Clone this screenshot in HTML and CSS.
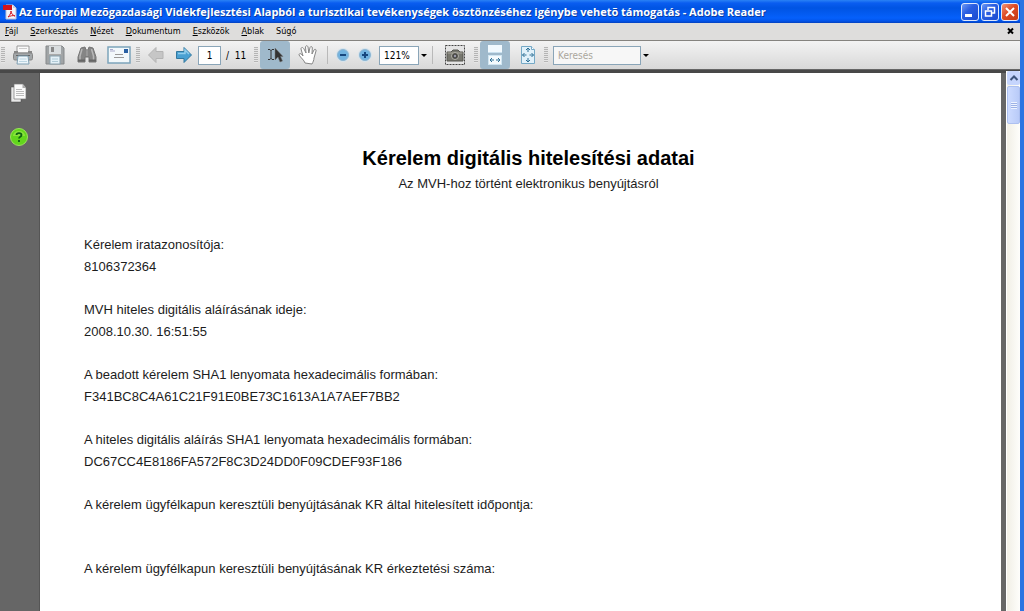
FILE: index.html
```html
<!DOCTYPE html>
<html lang="hu">
<head>
<meta charset="utf-8">
<title>Adobe Reader</title>
<link rel="stylesheet" href="styles.css">
</head>
<body>
<div class="window">
  <header class="titlebar">
    <svg class="app-icon" width="14" height="16" viewBox="0 0 14 16" aria-hidden="true">
      <path d="M3 1h7l3 3v11H3z" fill="#f4f4fa" stroke="#b9c0d8"/>
      <path d="M10 1v3h3z" fill="#c9cfe2"/>
      <rect x="0" y="1" width="9" height="5" fill="#d3141c"/>
      <path d="M5 13c2-2 3-4 3-6 0 3 2 4 4 5-2-1-5 0-7 1z" fill="none" stroke="#d3141c"/>
    </svg>
    <h1 class="title">Az Európai Mezõgazdasági Vidékfejlesztési Alapból a turisztikai tevékenységek ösztönzéséhez igénybe vehetõ támogatás - Adobe Reader</h1>
    <div class="controls">
      <button class="ctl" type="button" aria-label="Kis méret"><svg width="16" height="16" viewBox="0 0 16 16"><path d="M3 11.500h7" stroke="#fff" stroke-width="3"/></svg></button>
      <button class="ctl" type="button" aria-label="Előző méret"><svg width="16" height="16" viewBox="0 0 16 16"><path d="M6 6V3.500h6.500v5.500h-3" fill="none" stroke="#fff" stroke-width="1.500"/><path d="M3.500 7h6v5h-6z" fill="none" stroke="#fff" stroke-width="1.500"/></svg></button>
      <button class="ctl close" type="button" aria-label="Bezárás"><svg width="16" height="16" viewBox="0 0 16 16"><path d="M4 4l8 8M12 4l-8 8" stroke="#fff" stroke-width="2"/></svg></button>
    </div>
  </header>

  <nav class="menubar">
    <button class="menu" type="button"><u>F</u>ájl</button>
    <button class="menu" type="button"><u>S</u>zerkesztés</button>
    <button class="menu" type="button"><u>N</u>ézet</button>
    <button class="menu" type="button"><u>D</u>okumentum</button>
    <button class="menu" type="button"><u>E</u>szközök</button>
    <button class="menu" type="button"><u>A</u>blak</button>
    <button class="menu" type="button">Sú<u>g</u>ó</button>
    <button class="doc-close" type="button" aria-label="Dokumentum bezárása"><svg width="8" height="8" viewBox="0 0 8 8"><path d="M1 1.500l5 5M6 1.500l-5 5" stroke="#000" stroke-width="2"/></svg></button>
  </nav>

  <div class="toolbar">
    <span class="grip"></span>
    <div class="group">
      <button class="tool file" type="button" aria-label="Nyomtatás">
        <svg width="20" height="20" viewBox="0 0 20 20"><path d="M4 1h12v7H4z" fill="#fafafa" stroke="#999"/><path d="M6 3.500h8" stroke="#ccc"/><rect x="1" y="6" width="4" height="3" fill="#888"/><rect x="15" y="6" width="4" height="3" fill="#888"/><rect x="0.500" y="8" width="19" height="7" rx="1.500" fill="#a3a7a9" stroke="#868686"/><path d="M3 10.500h14" stroke="#666"/><path d="M5 11h10l1 8H4z" fill="#edf6fb" stroke="#7f9fb2"/><path d="M6.500 14h7M6 16.500h8" stroke="#bcd5e2"/></svg>
      </button>
      <button class="tool file" type="button" aria-label="Mentés">
        <svg width="20" height="20" viewBox="0 0 20 20"><path d="M1 1h16l2 2v16H1z" fill="#a0a4a6" stroke="#86898b"/><rect x="4" y="1" width="12" height="8" fill="#d9dddf"/><rect x="6" y="2" width="3" height="5" fill="#888"/><path d="M3 9.500h14" stroke="#aaa"/><rect x="5" y="11" width="10" height="8" fill="#e3f0f7" stroke="#8ba2ae"/><path d="M7 14h6M7 16.500h6" stroke="#afc9d6"/></svg>
      </button>
      <button class="tool file" type="button" aria-label="Keresés a dokumentumban">
        <svg width="20" height="20" viewBox="0 0 20 20"><path d="M4 3l4-1 1 3h2l1-3 4 1 3 9v5h-7v-5H8v5H1v-5z" fill="#858585" stroke="#757575"/><path d="M5 4L3 11v5M14.500 4l2 7v5" fill="none" stroke="#b7b7b7" stroke-width="1.500"/><path d="M1 15.500h7M12 15.500h7" stroke="#666" stroke-width="2"/><path d="M10 5v6" stroke="#aaa"/></svg>
      </button>
      <button class="tool file" type="button" aria-label="E-mail">
        <svg width="24" height="18" viewBox="0 0 24 18"><rect x="1" y="1" width="22" height="16" fill="#f2f8fb" stroke="#7ca4bb" stroke-width="1.500"/><path d="M3 5h5M3 3.500h3" stroke="#aac"/><rect x="17" y="3" width="4" height="4" fill="#2860a4"/><path d="M8 8.500h8M7 11.500h10" stroke="#999"/></svg>
      </button>
    </div>
    <span class="grip"></span>
    <div class="group">
      <button class="tool step" type="button" aria-label="Előző oldal">
        <svg width="18" height="18" viewBox="0 0 18 18"><path d="M1.500 9L9 1.500v4h7v7H9v4z" fill="#c6c6c6" stroke="#b4b4b4" stroke-linejoin="round"/></svg>
      </button>
      <button class="tool step" type="button" aria-label="Következő oldal">
        <svg width="18" height="18" viewBox="0 0 18 18"><path d="M16.500 9L9 1.500v4H1.500v7H9v4z" fill="#4aa0d2" stroke="#32789f" stroke-linejoin="round"/><path d="M3 7.500h7V4l4 4" fill="none" stroke="#93cdec" stroke-width="1.500"/></svg>
      </button>
      <label class="pager"><input class="field page-no" type="text" value="1"><span>/&nbsp; 11</span></label>
    </div>
    <span class="grip"></span>
    <div class="group modes">
      <button class="tool mode active" type="button" aria-label="Kijelölés">
        <svg width="18" height="18" viewBox="0 0 18 18"><path d="M2 3.500h2l1 1 1-1h2M5 4v9M2 13.500h2l1-1 1 1h2" fill="none" stroke="#333"/><path d="M9 2v12l3-3 2 5 2.500-1-2-4.500H17z" fill="#333" stroke="#777" stroke-width=".5"/></svg>
      </button>
      <button class="tool mode" type="button" aria-label="Kéz">
        <svg width="20" height="20" viewBox="0 0 20 20"><path d="M7 18c-1-3-4-5-6-8 0-2 2-2 4 1L3 4c0-2 2-2 3 0l2 4-.5-6c.5-2 2-1.500 2.500 0l.8 6L12 2.500c.5-1.500 2.500-1 2.300.5L14 9l2-4c1-1.500 2.500-.5 2 1l-2 7c0 2-1 4-2 6z" fill="#fff" stroke="#868686" stroke-linejoin="round"/></svg>
      </button>
    </div>
    <span class="rule"></span>
    <div class="group">
      <button class="tool zoomer" type="button" aria-label="Kicsinyítés">
        <svg width="16" height="16" viewBox="0 0 16 16"><circle cx="8" cy="8" r="7" fill="#d5e3ec"/><circle cx="8" cy="8" r="5.500" fill="#72b3e0" stroke="#8db6d3"/><path d="M5 8h6" stroke="#17477e" stroke-width="2"/></svg>
      </button>
      <button class="tool zoomer" type="button" aria-label="Nagyítás">
        <svg width="16" height="16" viewBox="0 0 16 16"><circle cx="8" cy="8" r="7" fill="#d5e3ec"/><circle cx="8" cy="8" r="5.500" fill="#72b3e0" stroke="#8db6d3"/><path d="M5 8h6M8 5v6" stroke="#17477e" stroke-width="2"/></svg>
      </button>
    </div>
    <div class="combo">
      <input class="field zoom" type="text" value="121%" aria-label="Nagyítás mértéke">
      <button class="drop" type="button" aria-label="Nagyítások"></button>
    </div>
    <span class="rule"></span>
    <button class="tool mode snapshot" type="button" aria-label="Pillanatfelvétel">
      <svg width="20" height="20" viewBox="0 0 20 20"><rect x=".5" y=".5" width="19" height="19" fill="#e4e4e4" stroke="#444" stroke-dasharray="2 1"/><path d="M2 7h4l2-2h5l2 2h3v9H2z" fill="#77776f" stroke="#55554f"/><path d="M2.500 8h15" stroke="#aaa89d"/><circle cx="10" cy="11" r="3.500" fill="#4a4a46" stroke="#b3b2a8"/><circle cx="10" cy="11" r="1.200" fill="#99a"/></svg>
    </button>
    <span class="grip"></span>
    <div class="group modes">
      <button class="tool mode active" type="button" aria-label="Görgetés">
        <svg width="16" height="20" viewBox="0 0 16 20"><rect x="1" y="0" width="14" height="8" fill="#f1f9fe"/><path d="M1 7.500h14" stroke="#c9e1ef"/><rect x="1.500" y="10.500" width="13" height="9" fill="#f4fafd" stroke="#d0e6f2"/><path d="M3 15h4M9 15h4M5 13l-2 2 2 2M11 13l2 2-2 2" fill="none" stroke="#2f7196"/></svg>
      </button>
      <button class="tool mode" type="button" aria-label="Egy teljes oldal">
        <svg width="16" height="20" viewBox="0 0 16 20"><path d="M1.500 1.500h10l3 3v14h-13z" fill="#e1f1fa" stroke="#75a9c6"/><path d="M11.500 1.500v3h3" fill="#fff" stroke="#75a9c6"/><path d="M8 3v4M6 5l2-2 2 2M8 13v4M6 15l2 2 2-2M2.500 10h4M4.500 8l-2 2 2 2M9.500 10h4M11.500 8l2 2-2 2" fill="none" stroke="#2f7196"/></svg>
      </button>
    </div>
    <span class="grip"></span>
    <div class="combo">
      <input class="field search" type="text" placeholder="Keresés" aria-label="Keresés">
      <button class="drop" type="button" aria-label="Keresési beállítások"></button>
    </div>
  </div>

  <div class="workspace">
    <aside class="sidebar">
      <button class="side" type="button" aria-label="Oldalak">
        <svg width="18" height="20" viewBox="0 0 18 20"><path d="M1 4h10v15H1z" fill="#e8e8e8" stroke="#444" stroke-width=".5"/><path d="M4 1h9l3 4v11H4z" fill="#fafafa" stroke="#777" stroke-width=".7"/><path d="M12.500 1v4H16z" fill="#aaa"/><path d="M6 6.500h6M6 8.500h8M6 10.500h8M6 12.500h8" stroke="#bbb"/></svg>
      </button>
      <button class="side" type="button" aria-label="Súgó">
        <svg width="20" height="20" viewBox="0 0 20 20"><circle cx="10" cy="10" r="8.500" fill="#62d61c" stroke="#9be45c"/><path d="M4 9a6 5 0 0 1 12 0z" fill="#8ae33c"/><path d="M7.500 8c0-2.500 5-2.500 5 0 0 2-2.500 1.500-2.500 3.500M10 13v2" fill="none" stroke="#0d6113" stroke-width="1.800"/></svg>
      </button>
    </aside>
    <main class="page">
      <h2 class="heading">Kérelem digitális hitelesítési adatai</h2>
      <p class="subheading">Az MVH-hoz történt elektronikus benyújtásról</p>
      <dl class="facts">
        <div class="fact"><dt>Kérelem iratazonosítója:</dt><dd>8106372364</dd></div>
        <div class="fact"><dt>MVH hiteles digitális aláírásának ideje:</dt><dd>2008.10.30. 16:51:55</dd></div>
        <div class="fact"><dt>A beadott kérelem SHA1 lenyomata hexadecimális formában:</dt><dd>F341BC8C4A61C21F91E0BE73C1613A1A7AEF7BB2</dd></div>
        <div class="fact"><dt>A hiteles digitális aláírás SHA1 lenyomata hexadecimális formában:</dt><dd>DC67CC4E8186FA572F8C3D24DD0F09CDEF93F186</dd></div>
        <div class="fact"><dt>A kérelem ügyfélkapun keresztüli benyújtásának KR által hitelesített időpontja:</dt><dd></dd></div>
        <div class="fact"><dt>A kérelem ügyfélkapun keresztüli benyújtásának KR érkeztetési száma:</dt><dd></dd></div>
      </dl>
    </main>
    <div class="scrollbar">
      <button class="scroll-up" type="button" aria-label="Fel"><svg width="10" height="8" viewBox="0 0 10 8"><path d="M1.500 6L5 2.500 8.500 6" fill="none" stroke="#3f557d" stroke-width="2"/></svg></button>
      <div class="thumb"></div>
    </div>
  </div>
</div>
</body>
</html>
```
FILE: styles.css
```css
* { box-sizing: border-box; }

body {
  margin: 0;
  font-family: "DejaVu Sans Condensed", "DejaVu Sans", sans-serif;
  font-size: 9px;
  color: #000;
}

button {
  margin: 0;
  padding: 0;
  border: 0;
  background: none;
  font: inherit;
  color: inherit;
}

svg { display: block; }

.window {
  display: flex;
  flex-direction: column;
  height: 100vh;
  overflow: hidden;
  border-right: 4px solid #2b74e2;
}

/* Title bar */
.titlebar {
  display: flex;
  flex: none;
  align-items: center;
  gap: 2px;
  height: 23px;
  margin-right: -4px;
  padding: 0 5px 0 3px;
  background: linear-gradient(#2a82f5 0, #0a5df0 3px, #0054e3 8px, #0560fb 18px, #0254ea 21px, #0441bd 23px);
}

.title {
  flex: 1;
  margin: 0;
  overflow: hidden;
  white-space: nowrap;
  font: bold 11px/16px "Open Sans", sans-serif;
  color: #fff;
  text-shadow: 1px 1px 0 #0a3a9e;
}

.controls { display: flex; gap: 2px; }

.ctl {
  display: grid;
  place-items: center;
  width: 18px;
  height: 18px;
  border: 1px solid #dfe8fb;
  border-radius: 3px;
  background: linear-gradient(135deg, #6f9af4, #2a5ee2 40%, #1c4bd0);
}

.close { background: linear-gradient(135deg, #f0957a, #dd4b25 45%, #c53a14); }

/* Menu bar */
.menubar {
  display: flex;
  flex: none;
  align-items: center;
  gap: 12px;
  height: 18px;
  padding: 0 5px 2px;
  border-bottom: 1px solid #85837f;
  background: #dedddc;
}

.menu { line-height: 14px; }

.doc-close { margin-left: auto; }

/* Toolbar */
.toolbar {
  display: flex;
  flex: none;
  align-items: center;
  height: 29px;
  border-bottom: 1px solid #666;
  background: linear-gradient(#f3f3f3, #d8d8d8);
}

.group { display: flex; align-items: center; }

.modes { gap: 3px; }

.grip {
  width: 4px;
  height: 16px;
  margin: 0 2px 0 1px;
  background: repeating-linear-gradient(#b5b5b5 0 1px, #e6e6e6 1px 2px);
}

.rule {
  width: 1px;
  height: 18px;
  margin: 0 4px;
  background: #b9b9b9;
}

.tool {
  display: grid;
  place-items: center;
  height: 28px;
}

.file { width: 32px; }
.step { width: 28px; }
.mode { width: 30px; }
.zoomer { width: 22px; }
.snapshot { margin: 0 3px; }

.active {
  border-radius: 3px;
  background: #9fb9cb;
}

.field {
  height: 19px;
  padding: 0 4px;
  border: 1px solid #8aa5b8;
  background: #fff;
  font: inherit;
  font-size: 10px;
  color: #000;
}

.pager {
  display: flex;
  align-items: center;
  gap: 5px;
  width: 55px;
  font-size: 10px;
}

.page-no { width: 23px; padding: 0; text-align: center; }

.combo { display: flex; align-items: center; margin-left: 3px; }

.zoom { width: 40px; }

.search { width: 88px; background: #f7f7f7; }

.search::placeholder { color: #aaa69c; opacity: 1; }

.drop {
  display: grid;
  place-items: center;
  width: 9px;
  height: 19px;
}

.drop::before {
  content: "";
  border: 3px solid transparent;
  border-top: 3px solid #000;
  border-bottom: 0;
}

/* Document area */
.workspace {
  display: flex;
  flex: 1;
  min-height: 0;
  border-top: 3px solid #484848;
  background: #666;
}

.sidebar {
  display: flex;
  flex: none;
  flex-direction: column;
  align-items: center;
  gap: 24px;
  width: 40px;
  padding: 10px 2px 0 0;
  border-right: 1px solid #555;
}

.page {
  flex: 1;
  margin-right: 5px;
  padding: 70px 44px 0;
  background: #fff;
  font: 13px/22px "Liberation Sans", Arial, sans-serif;
  color: #1c1c1c;
}

.heading {
  margin: 0;
  padding-left: 16px;
  text-align: center;
  font-size: 20px;
  line-height: 30px;
  color: #000;
}

.subheading {
  margin: 0;
  padding-left: 16px;
  text-align: center;
}

.facts {
  display: flex;
  flex-direction: column;
  gap: 21px;
  margin: 39px 0 0;
}

.fact dd { min-height: 21px; margin: 0; }

/* Scroll bar */
.scrollbar {
  flex: none;
  width: 14px;
  margin-top: -2px;
  border-left: 1px solid #fff;
  background: linear-gradient(90deg, #f1efe6, #fefefb);
}

.scroll-up {
  display: grid;
  place-items: center;
  width: 100%;
  height: 14px;
  border-radius: 2px;
  background: #c6d5fd;
}

.thumb {
  display: grid;
  place-items: center;
  height: 38px;
  margin-top: 1px;
  border: 1px solid #adc0f0;
  border-radius: 2px;
  background: linear-gradient(90deg, #cddbff, #b9cbf8);
}

.thumb::before {
  content: "";
  width: 6px;
  height: 7px;
  background: repeating-linear-gradient(#eef3ff 0 1px, #9db2e6 1px 2px);
}
```
